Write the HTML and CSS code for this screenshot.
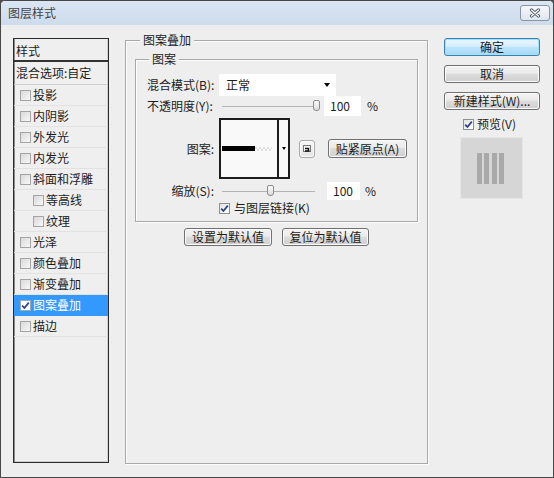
FILE: index.html
```html
<!DOCTYPE html>
<html lang="zh-CN">
<head>
<meta charset="utf-8">
<title>图层样式</title>
<link rel="stylesheet" href="styles.css">
</head>
<body>
<div class="window">
  <div class="titlebar">
    <span class="title">图层样式</span>
    <button class="close" aria-label="关闭">
      <svg width="12" height="10" viewBox="0 0 12 10"><path d="M2.5 2 L9.5 8 M9.5 2 L2.5 8" stroke="#56606e" stroke-width="3.2" stroke-linecap="round"/><path d="M2.5 2 L9.5 8 M9.5 2 L2.5 8" stroke="#ffffff" stroke-width="1.3" stroke-linecap="round"/></svg>
    </button>
  </div>
  <div class="content">
    <div class="stylelist">
      <div class="list-head">样式</div>
      <div class="list-blend">混合选项:自定</div>
      <div class="item"><span class="cb"></span>投影</div>
      <div class="item"><span class="cb"></span>内阴影</div>
      <div class="item"><span class="cb"></span>外发光</div>
      <div class="item"><span class="cb"></span>内发光</div>
      <div class="item"><span class="cb"></span>斜面和浮雕</div>
      <div class="item sub"><span class="cb"></span>等高线</div>
      <div class="item sub"><span class="cb"></span>纹理</div>
      <div class="item"><span class="cb"></span>光泽</div>
      <div class="item"><span class="cb"></span>颜色叠加</div>
      <div class="item"><span class="cb"></span>渐变叠加</div>
      <div class="item selected"><span class="cb checked"><svg width="9" height="9" viewBox="0 0 9 9"><path d="M1.2 4.6 L3.4 7 L7.8 1.6" fill="none" stroke="#2b3f86" stroke-width="1.7"/></svg></span>图案叠加</div>
      <div class="item"><span class="cb"></span>描边</div>
    </div>

    <div class="group main">
      <div class="group-title">图案叠加</div>
      <div class="group inner">
        <div class="group-title">图案</div>
        <div class="row row-blend">
          <span class="label">混合模式(B):</span>
          <div class="select"><span>正常</span><span class="arrow"></span></div>
        </div>
        <div class="row row-opacity">
          <span class="label">不透明度(Y):</span>
          <div class="slider s-opacity"><span class="thumb" style="left:91px"></span></div>
          <div class="num n-opacity">100</div>
          <span class="pct p-opacity">%</span>
        </div>
        <div class="row row-pattern">
          <span class="label right">图案:</span>
          <div class="picker">
            <div class="swatch"><span class="bar"></span><span class="checker"></span></div>
            <div class="picker-drop"><span class="arrow small"></span></div>
          </div>
          <button class="btn snap-icon" aria-label="从当前图案创建新的预设"><svg width="10" height="9" viewBox="0 0 10 9"><rect x="1.5" y="1.5" width="7" height="6" fill="#f4f4f4" stroke="#777"/><path d="M3 4.5 H6.5 V7.5 M3 7 H7.5" fill="none" stroke="#111" stroke-width="1.4"/></svg></button>
          <button class="btn snap">贴紧原点(A)</button>
        </div>
        <div class="row row-scale">
          <span class="label right">缩放(S):</span>
          <div class="slider s-scale"><span class="thumb" style="left:45px"></span></div>
          <div class="num n-scale">100</div>
          <span class="pct p-scale">%</span>
        </div>
        <div class="row row-link">
          <span class="cb checked"><svg width="9" height="9" viewBox="0 0 9 9"><path d="M1.2 4.6 L3.4 7 L7.8 1.6" fill="none" stroke="#2b3f86" stroke-width="1.7"/></svg></span>
          <span>与图层链接(K)</span>
        </div>
      </div>
      <div class="default-btns">
        <button class="btn b-set">设置为默认值</button>
        <button class="btn b-reset">复位为默认值</button>
      </div>
    </div>

    <div class="side">
      <button class="btn default">确定</button>
      <button class="btn">取消</button>
      <button class="btn">新建样式(W)...</button>
      <div class="preview-check">
        <span class="cb checked"><svg width="9" height="9" viewBox="0 0 9 9"><path d="M1.2 4.6 L3.4 7 L7.8 1.6" fill="none" stroke="#2b3f86" stroke-width="1.7"/></svg></span>
        <span>预览(V)</span>
      </div>
      <div class="thumbnail">
        <span class="tbar"></span><span class="tbar"></span><span class="tbar"></span><span class="tbar"></span>
      </div>
    </div>
  </div>
</div>
</body>
</html>
```

FILE: styles.css
```css
* { box-sizing: border-box; }
html, body { margin: 0; padding: 0; }
body {
  width: 554px;
  height: 478px;
  background: #4d4d4d;
  font-family: "Noto Sans CJK SC", "Liberation Sans", sans-serif;
  font-size: 12px;
  color: #1c1c1c;
  line-height: 14px;
}
.window {
  width: 554px;
  height: 478px;
  border: 1px solid #474747;
  border-radius: 5px 5px 0 0;
  background: #eeeeee;
  display: flex;
  flex-direction: column;
  overflow: hidden;
}
.titlebar {
  height: 24px;
  flex: none;
  display: flex;
  align-items: center;
  justify-content: space-between;
  padding: 0 3px 0 7px;
  background: linear-gradient(#dbe6f3, #cedbeb);
}
.title { color: #444; }
.close {
  width: 30px;
  height: 16px;
  padding: 0;
  border: 1px solid #8994a4;
  border-radius: 3px;
  background: linear-gradient(#f6f8fb, #dfe6ef);
  display: flex;
  align-items: center;
  justify-content: center;
}
.content {
  flex: 1;
  display: flex;
  align-items: flex-start;
  padding: 13px 12px 0 12px;
  gap: 16px;
}

/* left style list */
.stylelist {
  width: 96px;
  height: 425px;
  flex: none;
  border: 1px solid #2c2c2c;
  box-shadow: inset 1px 0 0 #8c8c8c, inset -1px 0 0 #d0d0d0, inset 0 -1px 0 #d0d0d0;
  background: #efefef;
}
.list-head {
  height: 23px;
  border-bottom: 2px solid #333;
  padding: 5px 0 0 2px;
}
.list-blend {
  height: 23px;
  padding: 4px 0 0 2px;
  border-bottom: 1px solid #cfcfcf;
}
.item {
  height: 21px;
  display: flex;
  align-items: center;
  padding-left: 6px;
  border-bottom: 1px solid #e2e2e2;
}
.item.sub { padding-left: 19px; }
.item.selected { background: #3399ff; color: #fff; border-bottom-color: #3399ff; }

.cb {
  width: 11px;
  height: 11px;
  flex: none;
  margin-right: 2px;
  border: 1px solid #a4a4a4;
  background: linear-gradient(135deg, #d9d9d9, #f8f8f8);
  display: flex;
  align-items: center;
  justify-content: center;
}
.cb.checked { background: linear-gradient(135deg, #e4e4e4, #ffffff); border-color: #8e8f8f; }
.item.selected .cb { border-color: #9ab; background: #fff; }

/* group boxes */
.group {
  border: 1px solid #a8a8a8;
  box-shadow: 1px 1px 0 #fdfdfd, inset 1px 1px 0 #fdfdfd;
}
.group.main {
  width: 303px;
  height: 424px;
  flex: none;
  margin-top: 2px;
  padding: 0 9px;
}
.group-title {
  display: table;
  background: #eeeeee;
  margin-top: -8px;
  padding: 0 3px;
  line-height: 14px;
}
.main > .group-title { margin-left: 5px; }
.group.inner {
  margin-top: 12px;
  padding: 0 0 6px 11px;
}
.inner > .group-title { margin-left: 2px; }

.row { display: flex; align-items: center; }
.label { width: 72px; flex: none; white-space: nowrap; }
.label.right { text-align: right; padding-right: 5px; }

.row-blend { margin-top: 8px; height: 22px; }
.select {
  width: 117px;
  height: 22px;
  background: #fff;
  display: flex;
  align-items: center;
  justify-content: space-between;
  padding: 0 6px 0 7px;
}
.arrow {
  width: 0;
  height: 0;
  border-left: 3px solid transparent;
  border-right: 3px solid transparent;
  border-top: 4px solid #000;
}
.arrow.small {
  border-left-width: 2px;
  border-right-width: 2px;
  border-top-width: 3px;
}

.row-opacity { height: 20px; }
.slider {
  position: relative;
  height: 14px;
  margin-left: 3px;
  background: linear-gradient(#b4b4b4, #b4b4b4) center / 100% 1px no-repeat;
}
.s-opacity { width: 96px; }
.s-scale { width: 93px; }
.thumb {
  position: absolute;
  top: 1px;
  width: 7px;
  height: 11px;
  border: 1px solid #8c8c8c;
  border-radius: 2px 2px 3px 3px;
  background: linear-gradient(#fafafa, #dcdcdc);
}
.num {
  background: #fff;
  padding-left: 6px;
  display: flex;
  align-items: center;
}
.n-opacity { width: 37px; height: 20px; margin-left: 6px; }
.p-opacity { margin-left: 6px; }
.n-scale { width: 33px; height: 18px; margin-left: 12px; }
.p-scale { margin-left: 5px; }

.row-pattern { margin-top: 2px; height: 61px; }
.picker {
  width: 71px;
  height: 61px;
  border: 2px solid #1d1d1d;
  background: #f9f9f9;
  display: flex;
}
.swatch {
  width: 56px;
  display: flex;
  align-items: center;
  padding-left: 1px;
}
.bar { width: 33px; height: 5px; background: #000; }
.checker {
  width: 17px;
  height: 4px;
  background:
    repeating-linear-gradient(90deg, #dcdcdc 0 2px, #ffffff 2px 4px) top / 100% 2px no-repeat,
    repeating-linear-gradient(90deg, #ffffff 0 2px, #dcdcdc 2px 4px) bottom / 100% 2px no-repeat;
}
.picker-drop {
  flex: 1;
  border-left: 2px solid #1d1d1d;
  display: flex;
  align-items: center;
  justify-content: center;
}

.btn {
  font: inherit;
  color: #1c1c1c;
  height: 18px;
  padding: 0;
  line-height: 16px;
  border: 1px solid #707070;
  border-radius: 3px;
  background: linear-gradient(#f3f3f3 0, #ebebeb 45%, #dddddd 50%, #cfcfcf 100%);
  box-shadow: inset 0 0 0 1px #fbfbfb;
  white-space: nowrap;
}
.snap-icon {
  width: 16px;
  height: 18px;
  margin-left: 9px;
  border-color: #a9a9a9;
  background: linear-gradient(#f7f7f7, #e4e4e4);
  display: flex;
  align-items: center;
  justify-content: center;
}
.snap { width: 79px; height: 19px; margin-left: 13px; }

.row-scale { margin-top: 3px; height: 18px; }
.row-link { margin-top: 1px; height: 14px; padding-left: 72px; }
.row-link .cb { margin-right: 4px; }

.default-btns {
  display: flex;
  justify-content: center;
  gap: 10px;
  margin-top: 6px;
}
.b-set { width: 88px; }
.b-reset { width: 87px; }

/* right column */
.side {
  width: 96px;
  flex: none;
  display: flex;
  flex-direction: column;
  gap: 9px;
}
.side .btn { width: 96px; }
.btn.default {
  border-color: #3c7fb1;
  background: linear-gradient(#e9f6fd 0, #d7effc 45%, #bce5fc 50%, #a6d8f4 100%);
  box-shadow: inset 0 0 0 1px #9fe2fb;
}
.preview-check {
  margin-top: -2px;
  height: 14px;
  display: flex;
  align-items: center;
  padding-left: 19px;
}
.preview-check .cb { margin-right: 3px; }
.thumbnail {
  margin-top: -3px;
  margin-left: 16px;
  width: 63px;
  height: 62px;
  background: #d6d6d6;
  border: 1px solid #e6e6e6;
  display: flex;
  justify-content: center;
  align-items: center;
  gap: 2.5px;
  padding-right: 2px;
}
.tbar { width: 5px; height: 31px; background: #a9a9a9; }
```
